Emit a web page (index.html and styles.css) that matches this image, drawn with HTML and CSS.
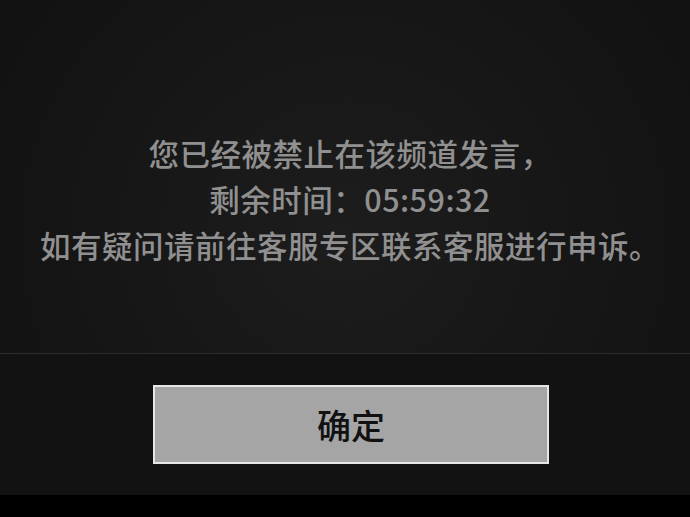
FILE: index.html
```html
<!DOCTYPE html>
<html lang="zh-CN">
<head>
<meta charset="utf-8">
<link rel="stylesheet" href="styles.css">
</head>
<body>
<div class="screen">
  <div class="message">
    <p class="line">您已经被禁止在该频道发言，</p>
    <p class="line">剩余时间：05:59:32</p>
    <p class="line">如有疑问请前往客服专区联系客服进行申诉。</p>
  </div>
  <div class="divider"></div>
  <div class="actions">
    <button class="confirm">确定</button>
  </div>
  <div class="bottom-bar"></div>
</div>
</body>
</html>
```
FILE: styles.css
```css
html, body {
  margin: 0;
  padding: 0;
  background: #000;
}
.screen {
  width: 690px;
  height: 517px;
  display: flex;
  flex-direction: column;
  background: radial-gradient(ellipse 70% 90% at 50% 45%, #1d1d1d 0%, #161616 50%, #101010 100%);
  font-family: "Noto Sans CJK SC", "Noto Sans", sans-serif;
}
.message {
  height: 353px;
  box-sizing: border-box;
  padding-top: 130px;
  padding-left: 10px;
  text-align: center;
}
.line {
  margin: 0;
  font-size: 30.5px;
  font-weight: 500;
  letter-spacing: 0.5px;
  line-height: 46px;
  color: #909090;
  white-space: nowrap;
}
.divider {
  height: 1px;
  background: #2c2c2c;
}
.actions {
  flex: 1;
  background: #121212;
  padding-top: 31px;
  padding-left: 153px;
  box-sizing: border-box;
}
.confirm {
  display: block;
  width: 396px;
  height: 79px;
  box-sizing: border-box;
  border: 2px solid #e6e6e6;
  background: #a5a5a5;
  color: #111;
  font-family: "Noto Sans CJK SC", "Noto Sans", sans-serif;
  font-size: 34px;
  font-weight: 500;
  padding: 0;
  margin: 0;
}
.bottom-bar {
  height: 22px;
  background: #000;
}
```
